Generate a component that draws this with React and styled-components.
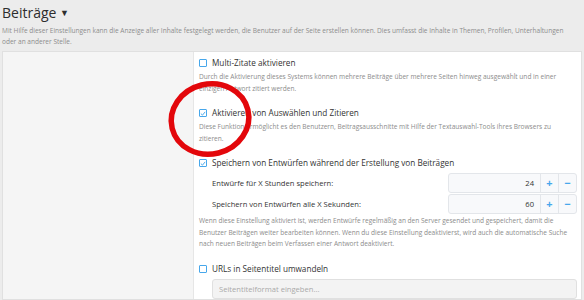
import React from 'react';
import styled, {createGlobalStyle} from 'styled-components';

const GlobalStyle = createGlobalStyle`
    body{
        margin:0;
        background:#ececec;
        font-family:"Open Sans", "Noto Sans", sans-serif;
    }
`

const Checkbox = ({checked}) => (
    <Box checked={checked}>
        {checked &&
            <svg width="7" height="7" viewBox="0 0 7 7">
                <path d="M1 3.6 L2.9 5.4 L6 1.6" fill="none" stroke="#47a7eb" strokeWidth="1.1"/>
            </svg>
        }
    </Box>
)

const NumberBox = ({value}) => (
    <Spinner>
        <SpinValue>{value}</SpinValue>
        <SpinBtn>+</SpinBtn>
        <SpinBtn>−</SpinBtn>
    </Spinner>
)

const App = () => {
    return(<>
        <GlobalStyle/>
        <Page>
            <Header>
                <Title>Beiträge <Caret>▼</Caret></Title>
                <Intro>
                    Mit Hilfe dieser Einstellungen kann die Anzeige aller Inhalte festgelegt werden, die Benutzer auf der Seite erstellen können. Dies umfasst die Inhalte in Themen, Profilen, Unterhaltungen oder an anderer Stelle.
                </Intro>
            </Header>
            <Panel>
                <Side/>
                <Main>
                    <Option>
                        <OptionLabel><Checkbox/>Multi-Zitate aktivieren</OptionLabel>
                        <Hint>Durch die Aktivierung dieses Systems können mehrere Beiträge über mehrere Seiten hinweg ausgewählt und in einer einzigen Antwort zitiert werden.</Hint>
                    </Option>
                    <Option>
                        <OptionLabel><Checkbox checked/>Aktivieren von Auswählen und Zitieren</OptionLabel>
                        <Hint>Diese Funktion ermöglicht es den Benutzern, Beitragsausschnitte mit Hilfe der Textauswahl-Tools ihres Browsers zu zitieren.</Hint>
                    </Option>
                    <Option>
                        <OptionLabel><Checkbox checked/>Speichern von Entwürfen während der Erstellung von Beiträgen</OptionLabel>
                        <SubRows>
                            <SubRow>
                                <SubLabel>Entwürfe für X Stunden speichern:</SubLabel>
                                <NumberBox value="24"/>
                            </SubRow>
                            <SubRow>
                                <SubLabel>Speichern von Entwürfen alle X Sekunden:</SubLabel>
                                <NumberBox value="60"/>
                            </SubRow>
                        </SubRows>
                        <Hint>Wenn diese Einstellung aktiviert ist, werden Entwürfe regelmäßig an den Server gesendet und gespeichert, damit die Benutzer Beiträgen weiter bearbeiten können. Wenn du diese Einstellung deaktivierst, wird auch die automatische Suche nach neuen Beiträgen beim Verfassen einer Antwort deaktiviert.</Hint>
                    </Option>
                    <Option>
                        <OptionLabel><Checkbox/>URLs in Seitentitel umwandeln</OptionLabel>
                        <TextInput placeholder="Seitentitelformat eingeben..."/>
                    </Option>
                </Main>
                <Marker width="92" height="84" viewBox="0 0 92 84">
                    <ellipse cx="46" cy="42" rx="39" ry="35" fill="none" stroke="#e3070b" strokeWidth="5.5" transform="rotate(-14 46 42)"/>
                </Marker>
            </Panel>
        </Page>
    </>)
}

const Page = styled.div`
    width:584px;
    height:300px;
    overflow:hidden;
`
const Header = styled.div`
    padding:4px 2px 4px;
`
const Title = styled.h1`
    margin:0;
    font-size:14px;
    font-weight:400;
    color:#2d2d2d;
    line-height:18px;
`
const Caret = styled.span`
    font-size:9px;
    position:relative;
    top:-2px;
`
const Intro = styled.p`
    margin:1px 0 0;
    max-width:572px;
    font-size:6.55px;
    line-height:11px;
    color:#8c8c8c;
`
const Panel = styled.div`
    position:relative;
    margin:0 2px;
    display:grid;
    grid-template-columns:191px 1fr;
    border:1px solid #e0e0e0;
    background:#fff;
`
const Side = styled.div`
    background:#f5f5f5;
    border-right:1px solid #e6e6e6;
`
const Main = styled.div`
    padding:5px 4px 0 5px;
    display:flex;
    flex-direction:column;
    gap:13px;
`
const Option = styled.div`
    display:flex;
    flex-direction:column;
`
const OptionLabel = styled.label`
    display:flex;
    align-items:center;
    gap:5px;
    font-size:8.2px;
    line-height:12px;
    color:#333;
    margin-bottom:2px;
`
const Box = styled.span`
    width:8px;
    height:8px;
    border:1px solid #47a7eb;
    border-radius:1px;
    background:#fff;
    display:inline-flex;
    align-items:center;
    justify-content:center;
    box-sizing:border-box;
    flex:none;
`
const Hint = styled.div`
    font-size:6.55px;
    line-height:11.5px;
    color:#8c8c8c;
`
const SubRows = styled.div`
    display:flex;
    flex-direction:column;
    gap:1px;
    padding-left:13px;
    margin:2px 0 1px;
`
const SubRow = styled.div`
    display:grid;
    grid-template-columns:1fr 129px;
    align-items:center;
`
const SubLabel = styled.span`
    font-size:7.6px;
    color:#333;
`
const Spinner = styled.div`
    display:grid;
    grid-template-columns:1fr 18px 18px;
    height:20px;
    border:1px solid #e3e6ea;
    border-radius:3px;
    background:#f8f9fb;
    box-sizing:border-box;
`
const SpinValue = styled.span`
    font-size:7.6px;
    color:#333;
    text-align:right;
    padding-right:6px;
    line-height:18px;
`
const SpinBtn = styled.span`
    border-left:1px solid #e3e6ea;
    color:#47a7eb;
    font-size:11px;
    font-weight:700;
    line-height:18px;
    text-align:center;
`
const TextInput = styled.input`
    margin:2px 0 0 13px;
    height:20px;
    box-sizing:border-box;
    border:1px solid #e0e0e0;
    border-radius:3px;
    background:#f3f3f3;
    padding:0 6px;
    font-family:inherit;
    font-size:7.6px;
    color:#333;
    &::placeholder{
        color:#a9a9a9;
    }
`
const Marker = styled.svg`
    position:absolute;
    left:161px;
    top:25px;
    pointer-events:none;
`

export default App;
